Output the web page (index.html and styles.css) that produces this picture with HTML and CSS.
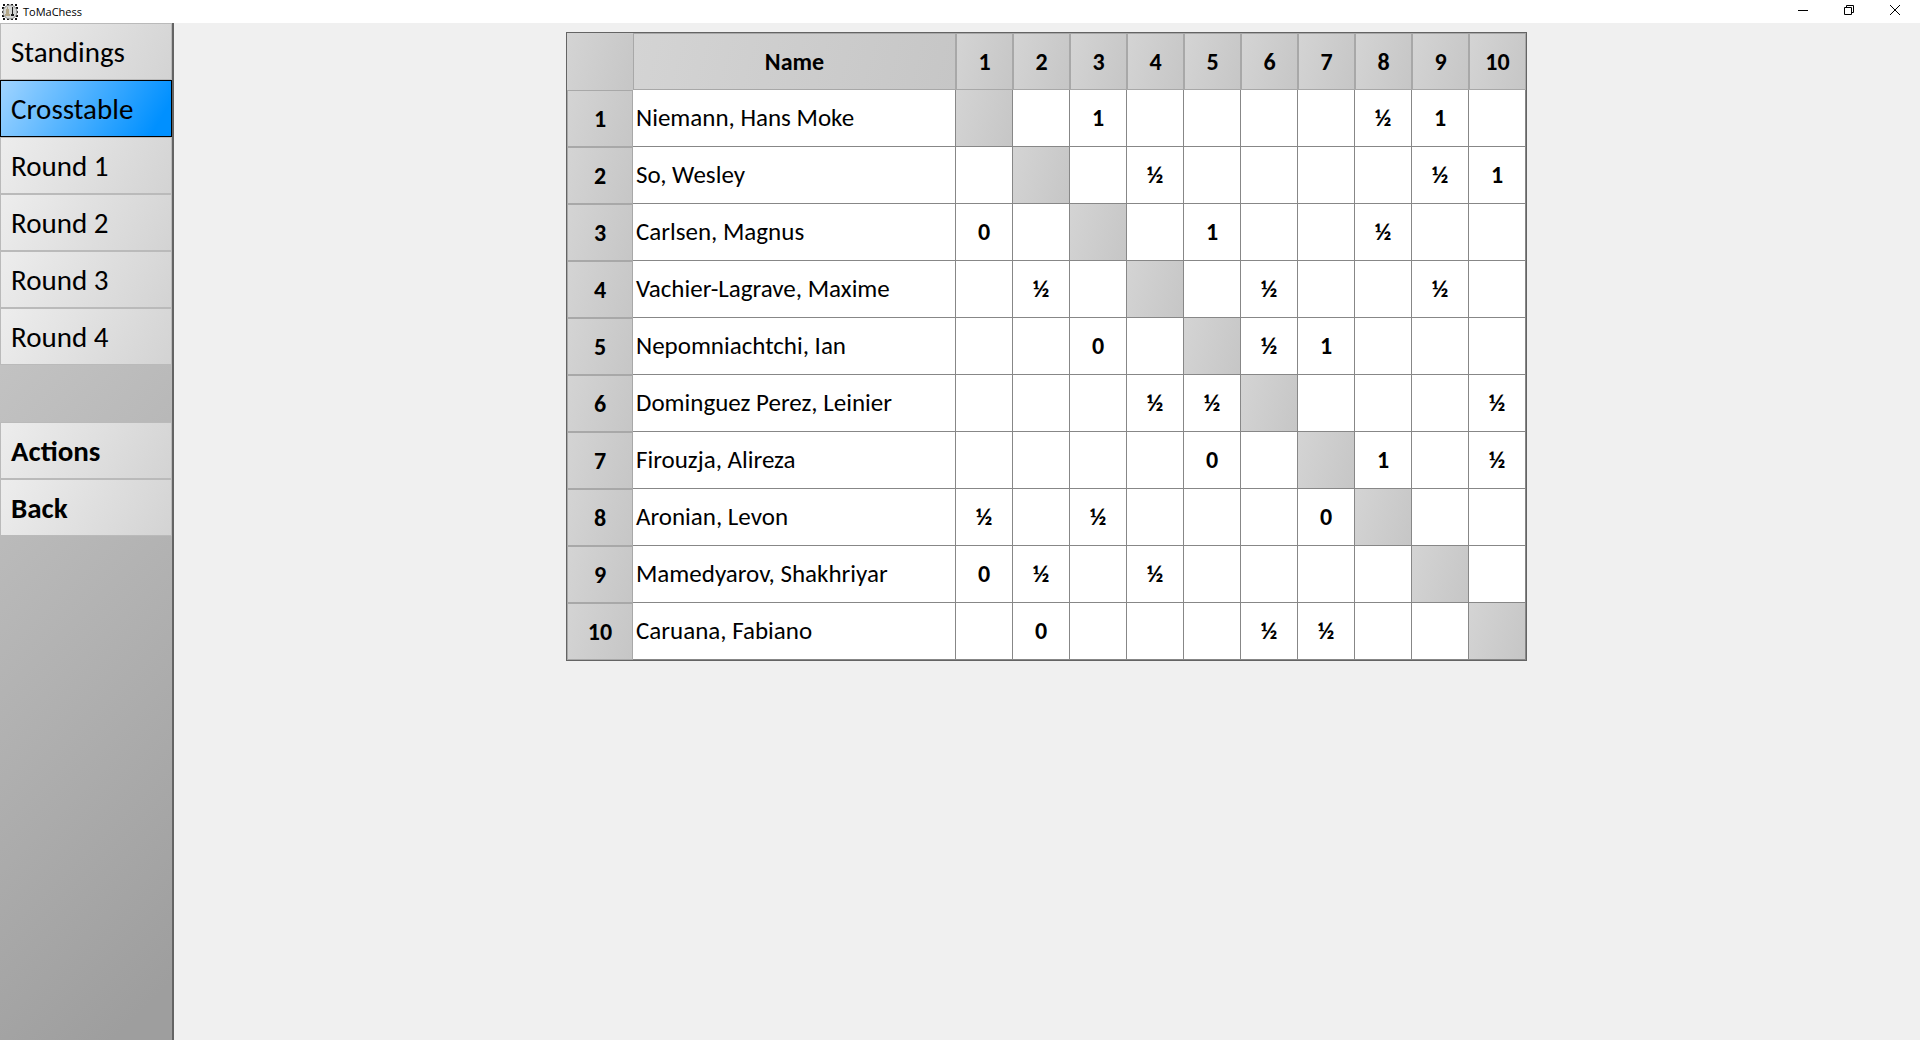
FILE: index.html
```html
<!DOCTYPE html>
<html lang="en">
<head>
<meta charset="utf-8">
<title>ToMaChess</title>
<link rel="stylesheet" href="styles.css">
</head>
<body>
<header class="titlebar">
  <svg class="app-icon" width="16" height="16" viewBox="0 0 16 16" aria-hidden="true">
    <rect width="16" height="16" fill="#fff"/>
    <rect x="1" y="1" width="14" height="14" fill="none" stroke="#111" stroke-width="2" stroke-dasharray="2 2"/>
    <circle cx="8" cy="8" r="7" fill="#d4d6d4" stroke="#8a8a8a" stroke-width="1"/>
    <path d="M5 3h1v2h1v5h1v2H3v-2h1V5h1z" fill="#b3a789"/>
    <path d="M10 3h1v7h1v2H9v-2h1z" fill="#1c1c1c"/>
  </svg>
  <span class="app-title">ToMaChess</span>
  <div class="window-controls">
    <button type="button" class="window-button" aria-label="Minimize"><svg width="10" height="10" viewBox="0 0 10 10"><path d="M0 5.5h10" stroke="#000"/></svg></button>
    <button type="button" class="window-button" aria-label="Restore"><svg width="10" height="10" viewBox="0 0 10 10" fill="none" stroke="#000"><path d="M.5 2.500h7v7h-7z"/><path d="M2.500 2.500v-2h7v7h-2"/></svg></button>
    <button type="button" class="window-button" aria-label="Close"><svg width="10" height="10" viewBox="0 0 10 10"><path d="M0 0l10 10M10 0L0 10" stroke="#000"/></svg></button>
  </div>
</header>
<div class="workspace">
  <nav class="sidebar">
    <button type="button" class="nav-item">Standings</button>
    <button type="button" class="nav-item selected" aria-current="page">Crosstable</button>
    <button type="button" class="nav-item">Round 1</button>
    <button type="button" class="nav-item">Round 2</button>
    <button type="button" class="nav-item">Round 3</button>
    <button type="button" class="nav-item">Round 4</button>
    <div class="nav-gap"></div>
    <button type="button" class="nav-item strong">Actions</button>
    <button type="button" class="nav-item strong">Back</button>
  </nav>
  <main class="content">
    <table class="crosstable">
      <thead>
        <tr><td class="corner"></td><th scope="col" class="name-head">Name</th><th scope="col">1</th><th scope="col">2</th><th scope="col">3</th><th scope="col">4</th><th scope="col">5</th><th scope="col">6</th><th scope="col">7</th><th scope="col">8</th><th scope="col">9</th><th scope="col">10</th></tr>
      </thead>
      <tbody>
        <tr><th scope="row">1</th><td class="name">Niemann, Hans Moke</td><td class="self"></td><td></td><td>1</td><td></td><td></td><td></td><td></td><td>½</td><td>1</td><td></td></tr>
        <tr><th scope="row">2</th><td class="name">So, Wesley</td><td></td><td class="self"></td><td></td><td>½</td><td></td><td></td><td></td><td></td><td>½</td><td>1</td></tr>
        <tr><th scope="row">3</th><td class="name">Carlsen, Magnus</td><td>0</td><td></td><td class="self"></td><td></td><td>1</td><td></td><td></td><td>½</td><td></td><td></td></tr>
        <tr><th scope="row">4</th><td class="name">Vachier-Lagrave, Maxime</td><td></td><td>½</td><td></td><td class="self"></td><td></td><td>½</td><td></td><td></td><td>½</td><td></td></tr>
        <tr><th scope="row">5</th><td class="name">Nepomniachtchi, Ian</td><td></td><td></td><td>0</td><td></td><td class="self"></td><td>½</td><td>1</td><td></td><td></td><td></td></tr>
        <tr><th scope="row">6</th><td class="name">Dominguez Perez, Leinier</td><td></td><td></td><td></td><td>½</td><td>½</td><td class="self"></td><td></td><td></td><td></td><td>½</td></tr>
        <tr><th scope="row">7</th><td class="name">Firouzja, Alireza</td><td></td><td></td><td></td><td></td><td>0</td><td></td><td class="self"></td><td>1</td><td></td><td>½</td></tr>
        <tr><th scope="row">8</th><td class="name">Aronian, Levon</td><td>½</td><td></td><td>½</td><td></td><td></td><td></td><td>0</td><td class="self"></td><td></td><td></td></tr>
        <tr><th scope="row">9</th><td class="name">Mamedyarov, Shakhriyar</td><td>0</td><td>½</td><td></td><td>½</td><td></td><td></td><td></td><td></td><td class="self"></td><td></td></tr>
        <tr><th scope="row">10</th><td class="name">Caruana, Fabiano</td><td></td><td>0</td><td></td><td></td><td></td><td>½</td><td>½</td><td></td><td></td><td class="self"></td></tr>
      </tbody>
    </table>
  </main>
</div>
</body>
</html>
```
FILE: styles.css
```css
* {
  box-sizing: border-box;
}

body {
  margin: 0;
  min-height: 100vh;
  display: flex;
  flex-direction: column;
  background: #f0f0f0;
  color: #000;
  font-family: Carlito, Lato, sans-serif;
}

.titlebar {
  display: flex;
  align-items: center;
  height: 23px;
  padding-left: 2px;
  background: #fff;
  font: 11px/16px "Open Sans", sans-serif;
}

.app-title {
  margin-left: 5px;
}

.window-controls {
  display: flex;
  align-self: stretch;
  margin-left: auto;
  padding-right: 2px;
}

.window-button {
  display: flex;
  align-items: center;
  justify-content: center;
  width: 46px;
  padding: 0 0 3px;
  border: 0;
  background: none;
}

.workspace {
  flex: 1;
  display: flex;
}

.sidebar {
  width: 174px;
  display: flex;
  flex-direction: column;
  border-right: 2px solid #646464;
  background: linear-gradient(135deg, #d2d2d2, #9e9e9e 95%);
}

.nav-item {
  height: 57px;
  padding: 0 10px;
  border: 1px solid #bababa;
  background: linear-gradient(120deg, #ededed, #d3d3d3);
  color: #000;
  font: 29px/36px Carlito, Lato, sans-serif;
  text-align: left;
}

.nav-item.selected {
  border-color: #000;
  background: linear-gradient(120deg, #a0d4ff, #0090ff 90%);
}

.nav-item.strong {
  font-weight: 700;
}

.nav-gap {
  height: 57px;
}

.content {
  flex: 1;
  display: flex;
  justify-content: center;
  align-items: flex-start;
  padding: 9px 9px 9px 8px;
}

.crosstable {
  border: 1px solid #646464;
  border-collapse: separate;
  border-spacing: 0;
  table-layout: fixed;
  width: 961px;
  background: #fff;
  font-size: 24px;
  line-height: 32px;
}

.crosstable th,
.crosstable td {
  height: 57px;
  padding: 0;
  text-align: center;
  font-weight: 700;
}

.crosstable td {
  border: solid #878787;
  border-width: 0 1px 1px 0;
}

.crosstable th {
  border: 1px solid #a8a8a8;
  background: linear-gradient(105deg, #d4d4d4, #c6c6c6);
}

.crosstable .self {
  background: linear-gradient(105deg, #d4d4d4, #c6c6c6);
}

.crosstable .corner {
  width: 66px;
  border: 0;
  background: linear-gradient(105deg, #d4d4d4, #c6c6c6);
}

.crosstable .name-head {
  width: 323px;
}

.crosstable .name {
  padding-left: 3px;
  text-align: left;
  font-size: 25px;
  font-weight: 400;
}
```
